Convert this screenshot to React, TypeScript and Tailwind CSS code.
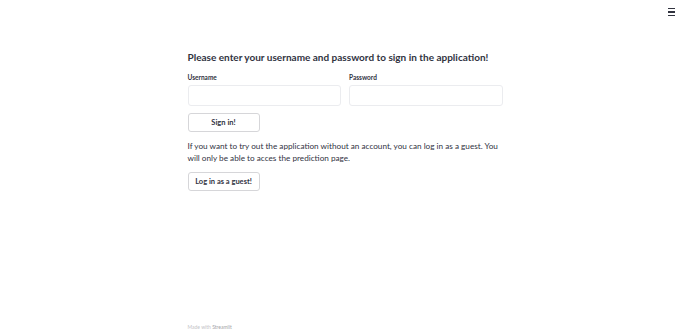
export default function App() {
  return (
    <div className="relative h-[334px] w-full bg-white text-[#31333f] [font-family:Lato,'Noto_Sans',sans-serif]">
      <button className="absolute right-[12px] top-[6px] flex h-[12px] w-[10px] flex-col justify-center gap-[2px]">
        <span className="block h-[1.5px] w-[7px] bg-[#31333f]" />
        <span className="block h-[1.5px] w-[7px] bg-[#31333f]" />
        <span className="block h-[1.5px] w-[7px] bg-[#31333f]" />
      </button>

      <main className="mx-auto flex w-[315px] flex-col pt-[50px]">
        <h2 className="whitespace-nowrap text-[10px] font-bold leading-[14px]">
          Please enter your username and password to sign in the application!
        </h2>

        <div className="mt-[9px] grid grid-cols-2 gap-[8px]">
          <label className="flex flex-col">
            <span className="text-[6.5px] font-bold leading-[9px]">Username</span>
            <input className="mt-[3px] h-[21px] rounded-[3px] border border-[#ebecef] bg-white outline-none" />
          </label>
          <label className="flex flex-col">
            <span className="text-[6.5px] font-bold leading-[9px]">Password</span>
            <input type="password" className="mt-[3px] h-[21px] rounded-[3px] border border-[#ebecef] bg-white outline-none" />
          </label>
        </div>

        <button className="mt-[7px] h-[19px] w-[72px] rounded-[3px] border border-[#d6d6d9] bg-white text-[7.5px] font-bold text-[#31333f]">
          Sign in!
        </button>

        <p className="mt-[8px] text-[8.2px] leading-[12px]">
          If you want to try out the application without an account, you can log in as a guest. You will only be able to acces the prediction page.
        </p>

        <button className="mt-[8px] h-[19px] w-[72px] rounded-[3px] border border-[#d6d6d9] bg-white text-[7.5px] font-bold text-[#31333f]">
          Log in as a guest!
        </button>
      </main>

      <footer className="absolute bottom-[3px] left-0 right-0 mx-auto w-[315px] text-[5px] text-[#c4c4c8]">
        Made with <span className="text-[#a3a3a8]">Streamlit</span>
      </footer>
    </div>
  );
}
